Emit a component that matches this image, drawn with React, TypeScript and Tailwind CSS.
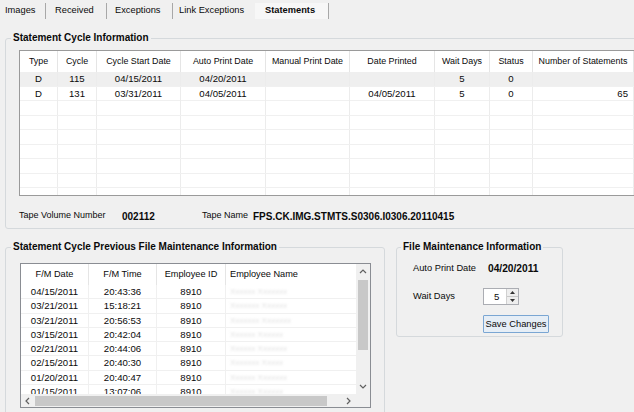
const cols1 = 'grid grid-cols-[38px_39px_84px_85px_84px_85px_55px_43px_101px]';
const cols2 = 'grid grid-cols-[68px_68px_69px_130px]';

const head1 = ['Type', 'Cycle', 'Cycle Start Date', 'Auto Print Date', 'Manual Print Date', 'Date Printed', 'Wait Days', 'Status', 'Number of Statements'];

const rows1 = [
  ['D', '115', '04/15/2011', '04/20/2011', '', '', '5', '0', ''],
  ['D', '131', '03/31/2011', '04/05/2011', '', '04/05/2011', '5', '0', '65'],
];

const rows2 = [
  ['04/15/2011', '20:43:36', '8910', 'Xxxxxx Xxxxxxx'],
  ['03/21/2011', '15:18:21', '8910', 'Xxxxxxx Xxxxxx'],
  ['03/21/2011', '20:56:53', '8910', 'Xxxxxxx Xxxxxxx'],
  ['03/15/2011', '20:42:04', '8910', 'Xxxxxx Xxxxxx'],
  ['02/21/2011', '20:44:06', '8910', 'Xxxxxx Xxxxxxx'],
  ['02/15/2011', '20:40:30', '8910', 'Xxxxxxx Xxxxx'],
  ['01/20/2011', '20:40:47', '8910', 'Xxxxxx Xxxxxxx'],
  ['01/15/2011', '13:07:06', '8910', 'Xxxxxx Xxxxxx'],
];

const tabs = [
  { label: 'Images', cls: 'w-[46px] pl-[5px]' },
  { label: 'Received', cls: 'w-[61px] pl-[9px]' },
  { label: 'Exceptions', cls: 'w-[66px] pl-[8px]' },
  { label: 'Link Exceptions', cls: 'w-[82px] pl-[6px] border-r-0' },
  { label: 'Statements', cls: 'w-[74px] pl-[10px] font-bold bg-[#f7f7f7]' },
];

const Chevron = ({ dir }: { dir: 'up' | 'down' | 'left' | 'right' }) => {
  const pts = {
    up: '1,5 4,2 7,5',
    down: '1,2 4,5 7,2',
    left: '5,1 2,4 5,7',
    right: '2,1 5,4 2,7',
  }[dir];
  return (
    <svg width="8" height="8" viewBox="0 0 8 8">
      <polyline points={pts} fill="none" stroke="#606060" strokeWidth="1.2" />
    </svg>
  );
};

export default function App() {
  return (
    <div className="w-[634px] h-[412px] overflow-hidden bg-[#f0f0f0] text-[#0a0a0a] font-[family-name:'Liberation_Sans',Arial,sans-serif] flex flex-col">
      {/* tab strip */}
      <div className="h-[19px] flex items-stretch pt-[3px] text-[9.3px] shrink-0">
        {tabs.map((t) => (
          <div key={t.label} className={`flex items-center border-r border-[#a8a8a8] ${t.cls}`}>
            {t.label}
          </div>
        ))}
      </div>

      {/* statement cycle information */}
      <fieldset className="ml-[5px] mt-[13px] w-[640px] h-[197px] border border-[#d5d9dc] rounded-[3px] shrink-0">
        <legend className="ml-[5px] px-[2px] text-[10px] leading-[12px] font-bold">Statement Cycle Information</legend>
        <div className="pl-[13px] pt-[6px]">
          <div className="w-[616px] h-[146px] border border-[#9a9a9a] bg-white overflow-hidden">
            <div className={`${cols1} h-[21px] text-[8.9px]`}>
              {head1.map((h) => (
                <div key={h} className="flex items-center justify-center whitespace-nowrap border-r border-[#e5e5e5]">
                  {h}
                </div>
              ))}
            </div>
            {Array.from({ length: 9 }).map((_, i) => {
              const r = rows1[i];
              return (
                <div
                  key={i}
                  className={`${cols1} h-[14.5px] text-[9.6px] leading-[14px] border-b border-[#f0f0f0] ${i === 0 ? 'bg-[#efefef]' : ''}`}
                >
                  {Array.from({ length: 9 }).map((__, j) => (
                    <div
                      key={j}
                      className={`border-r border-[#ececec] ${j === 8 ? 'text-right pr-[5px]' : 'text-center'}`}
                    >
                      {r ? r[j] : ''}
                    </div>
                  ))}
                </div>
              );
            })}
          </div>
          <div className="mt-[14px] h-[12px] flex items-center text-[9px]">
            <span className="w-[103px]">Tape Volume Number</span>
            <span className="w-[80px] font-bold text-[10px]">002112</span>
            <span className="w-[51px]">Tape Name</span>
            <span className="font-bold text-[10px]">FPS.CK.IMG.STMTS.S0306.I0306.20110415</span>
          </div>
        </div>
      </fieldset>

      <div className="flex items-start mt-[12px]">
        {/* previous file maintenance */}
        <fieldset className="ml-[5px] w-[380px] h-[200px] border border-[#d5d9dc] rounded-[3px] shrink-0">
          <legend className="ml-[5px] px-[2px] text-[10px] leading-[12px] font-bold">
            Statement Cycle Previous File Maintenance Information
          </legend>
          <div className="pl-[14px] pt-[10px]">
            <div className="w-[351px] h-[145px] border border-[#8a8d93] bg-white flex flex-col">
              <div className="flex h-[130px]">
                <div className="w-[335px] overflow-hidden">
                  <div className={`${cols2} h-[21px] text-[9.2px]`}>
                    <div className="flex items-center justify-center border-r border-[#e5e5e5]">F/M Date</div>
                    <div className="flex items-center justify-center border-r border-[#e5e5e5]">F/M Time</div>
                    <div className="flex items-center justify-center border-r border-[#e5e5e5]">Employee ID</div>
                    <div className="flex items-center pl-[4px]">Employee Name</div>
                  </div>
                  {rows2.map((r, i) => (
                    <div key={i} className={`${cols2} h-[14.3px] leading-[14px] text-[9.6px] border-b border-[#f0f0f0]`}>
                      <div className="text-center border-r border-[#f0f0f0]">{r[0]}</div>
                      <div className="text-center border-r border-[#f0f0f0]">{r[1]}</div>
                      <div className="text-center border-r border-[#f0f0f0]">{r[2]}</div>
                      <div className="pl-[4px] text-[#e2e2e2] blur-[1px] text-[8px]">{r[3]}</div>
                    </div>
                  ))}
                </div>
                <div className="w-[14px] bg-[#f0f0f0] flex flex-col items-center">
                  <div className="h-[16px] flex items-center justify-center"><Chevron dir="up" /></div>
                  <div className="w-[10px] h-[70px] bg-[#c8c8c8]" />
                  <div className="flex-1" />
                  <div className="h-[15px] flex items-center justify-center"><Chevron dir="down" /></div>
                </div>
              </div>
              <div className="flex h-[13px] bg-[#f0f0f0]">
                <div className="w-[14px] flex items-center justify-center"><Chevron dir="left" /></div>
                <div className="w-[292px] flex items-center">
                  <div className="w-full h-[10px] bg-[#c8c8c8]" />
                </div>
                <div className="w-[15px]" />
                <div className="w-[14px] flex items-center justify-center"><Chevron dir="right" /></div>
                <div className="w-[14px]" />
              </div>
            </div>
          </div>
        </fieldset>

        {/* file maintenance */}
        <fieldset className="ml-[11px] w-[167px] h-[96px] border border-[#d5d9dc] rounded-[3px] shrink-0">
          <legend className="ml-[4px] px-[2px] text-[10px] leading-[12px] font-bold">File Maintenance Information</legend>
          <div className="pl-[16px] pt-[10px] text-[9.3px]">
            <div className="flex items-center h-[12px]">
              <span className="w-[75px]">Auto Print Date</span>
              <span className="font-bold text-[10.2px]">04/20/2011</span>
            </div>
            <div className="flex items-center mt-[13px] h-[17px]">
              <span className="w-[70px]">Wait Days</span>
              <div className="w-[36px] h-[17px] border border-[#abadb3] bg-white flex">
                <span className="flex-1 pl-[10px] text-[9.6px] leading-[15px]">5</span>
                <div className="w-[12px] flex flex-col border-l border-[#d0d0d0] bg-[#eeeeee]">
                  <div className="flex-1 flex items-center justify-center border-b border-[#c8c8c8]">
                    <svg width="5" height="3" viewBox="0 0 5 3"><polygon points="0,3 2.5,0 5,3" fill="#333" /></svg>
                  </div>
                  <div className="flex-1 flex items-center justify-center">
                    <svg width="5" height="3" viewBox="0 0 5 3"><polygon points="0,0 2.5,3 5,0" fill="#333" /></svg>
                  </div>
                </div>
              </div>
            </div>
            <div className="mt-[10px] pl-[70px]">
              <button className="w-[66px] h-[18px] border border-[#7aa6d3] bg-[#e6eef6] text-[9.3px] leading-[16px] rounded-[1px]">
                Save Changes
              </button>
            </div>
          </div>
        </fieldset>
      </div>
    </div>
  );
}
